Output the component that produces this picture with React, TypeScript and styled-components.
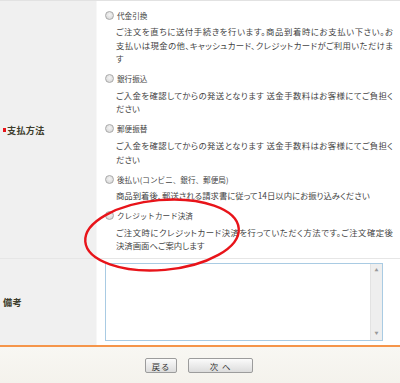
import styled, { createGlobalStyle } from 'styled-components';

const GlobalStyle = createGlobalStyle`
	html, body {
		margin: 0;
		padding: 0;
		background: #ffffff;
	}
	body {
		font-family: 'Noto Sans CJK JP', 'Liberation Sans', sans-serif;
		color: #3a3a3a;
	}
`;

interface IPayment {
	id: string;
	label: string;
	lines: string[];
}

const payments: IPayment[] = [
	{
		id: 'cod',
		label: '代金引換',
		lines: [
			'ご注文を直ちに送付手続きを行います。商品到着時にお支払い下さい。お',
			'支払いは現金の他、キャッシュカード、クレジットカードがご利用いただけま',
			'す',
		],
	},
	{
		id: 'bank',
		label: '銀行振込',
		lines: [
			'ご入金を確認してからの発送となります 送金手数料はお客様にてご負担く',
			'ださい',
		],
	},
	{
		id: 'postal',
		label: '郵便振替',
		lines: [
			'ご入金を確認してからの発送となります 送金手数料はお客様にてご負担く',
			'ださい',
		],
	},
	{
		id: 'later',
		label: '後払い(コンビニ、銀行、郵便局)',
		lines: ['商品到着後、郵送される請求書に従って14日以内にお振り込みください'],
	},
	{
		id: 'card',
		label: 'クレジットカード決済',
		lines: [
			'ご注文時にクレジットカード決済を行っていただく方法です。ご注文確定後',
			'決済画面へご案内します',
		],
	},
];

function App() {
	return (
		<Page>
			<GlobalStyle />
			<Form>
				<Row $height={257} $top>
					<HeadCell>
						<Required />
						支払方法
					</HeadCell>
					<BodyCell>
						<Options>
							{payments.map((p) => (
								<Option key={p.id}>
									<OptionLabel>
										<Radio />
										{p.label}
									</OptionLabel>
									<OptionText>
										{p.lines.map((line, i) => (
											<Line key={i} $full={i < p.lines.length - 1}>
												{line}
											</Line>
										))}
									</OptionText>
								</Option>
							))}
						</Options>
					</BodyCell>
				</Row>
				<Row $height={86}>
					<HeadCell>備考</HeadCell>
					<BodyCell>
						<NoteBox>
							<NoteArea />
							<ScrollBar>
								<Arrow>▲</Arrow>
								<Arrow>▼</Arrow>
							</ScrollBar>
						</NoteBox>
					</BodyCell>
				</Row>
			</Form>
			<Footer>
				<Button $width={32}>戻る</Button>
				<Button $width={65}>次 へ</Button>
			</Footer>
			<Circle viewBox="0 0 400 383" width="400" height="383">
				<ellipse
					cx="162"
					cy="235"
					rx="77"
					ry="35"
					transform="rotate(-5 162 235)"
					fill="none"
					stroke="#e8141a"
					strokeWidth="2.4"
				/>
			</Circle>
		</Page>
	);
}

const Page = styled.div`
	position: relative;
	width: 400px;
	height: 383px;
	overflow: hidden;
	display: flex;
	flex-direction: column;
`;

const Form = styled.div`
	display: flex;
	flex-direction: column;
`;

const Row = styled.div<{ $height: number; $top?: boolean }>`
	display: grid;
	grid-template-columns: 97px 1fr;
	height: ${(p) => p.$height}px;
	border-top: 1px solid ${(p) => (p.$top ? '#e2e2e2' : '#e6e6e6')};
`;

const HeadCell = styled.div`
	display: flex;
	align-items: center;
	padding-left: 3px;
	background: #f0f0f0;
	border-right: 1px solid #f7f7f7;
	font-size: 9.2px;
	font-weight: bold;
	color: #3d3d2c;
	letter-spacing: 0.2px;
`;

const Required = styled.span`
	display: inline-block;
	width: 3px;
	height: 4px;
	margin-right: 1px;
	background: #e8141a;
`;

const BodyCell = styled.div`
	background: #ffffff;
	padding: 7px 0 0 8px;
`;

const Options = styled.div`
	display: flex;
	flex-direction: column;
	gap: 6px;
`;

const Option = styled.div`
	display: flex;
	flex-direction: column;
	gap: 3px;
`;

const OptionLabel = styled.div`
	display: flex;
	align-items: center;
	height: 14px;
	font-size: 7.6px;
	color: #444;
	white-space: nowrap;
`;

const Radio = styled.span`
	display: inline-block;
	width: 7px;
	height: 7px;
	margin-right: 3px;
	border: 1px solid #a9a9a9;
	border-radius: 50%;
	background: radial-gradient(circle at 50% 40%, #f4f4f4, #d2d2d2);
`;

const OptionText = styled.div`
	padding-left: 11px;
	font-size: 8.4px;
	font-feature-settings: 'palt';
	line-height: 13.6px;
	color: #444;
`;

const Line = styled.div<{ $full: boolean }>`
	width: 277px;
	white-space: nowrap;
	text-align: left;
	text-align-last: ${(p) => (p.$full ? 'justify' : 'left')};
	text-justify: inter-character;
`;

const NoteBox = styled.div`
	display: flex;
	width: 276px;
	height: 76px;
	margin-top: -3px;
	border: 1px solid #a9cbe3;
	background: #fff;
`;

const NoteArea = styled.div`
	flex: 1;
`;

const ScrollBar = styled.div`
	width: 11px;
	display: flex;
	flex-direction: column;
	justify-content: space-between;
	align-items: center;
	padding: 4px 0;
	background: #eeeeee;
	border-left: 1px solid #e2e2e2;
`;

const Arrow = styled.span`
	font-size: 4px;
	color: #999;
	line-height: 5px;
`;

const Footer = styled.div`
	flex: 1;
	display: flex;
	justify-content: center;
	align-items: flex-start;
	gap: 11px;
	padding-top: 11px;
	padding-right: 2px;
	border-top: 2px solid #f5954a;
	background: linear-gradient(#f8f7f3, #f4f2ec);
`;

const Button = styled.button<{ $width: number }>`
	width: ${(p) => p.$width}px;
	height: 15px;
	padding: 0;
	border: 1px solid #9c9c9c;
	border-radius: 2px;
	background: linear-gradient(#fbfbfb, #dcdcdc);
	font-family: 'Noto Sans CJK JP', sans-serif;
	font-size: 8.4px;
	line-height: 12px;
	color: #333;
	letter-spacing: 1px;
`;

const Circle = styled.svg`
	position: absolute;
	left: 0;
	top: 0;
	pointer-events: none;
`;

export default App;
